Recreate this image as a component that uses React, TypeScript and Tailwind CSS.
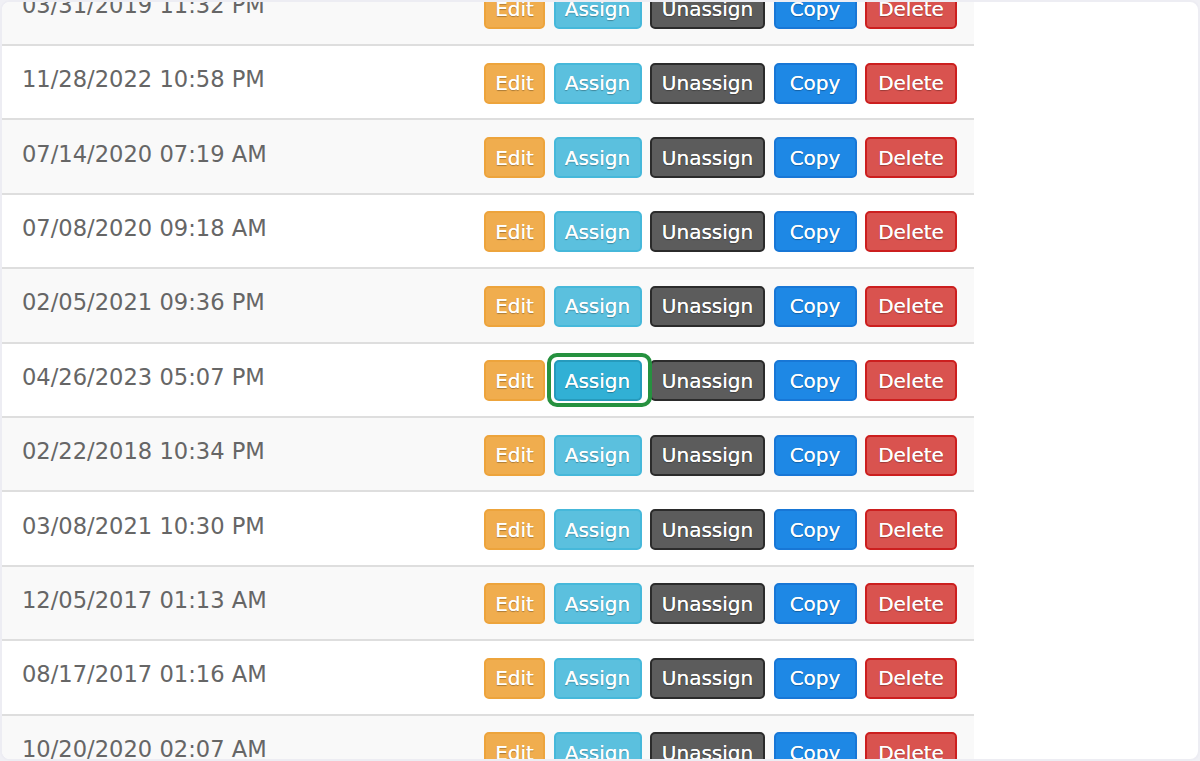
import React from "react";

const rows = [
  "03/31/2019 11:32 PM",
  "11/28/2022 10:58 PM",
  "07/14/2020 07:19 AM",
  "07/08/2020 09:18 AM",
  "02/05/2021 09:36 PM",
  "04/26/2023 05:07 PM",
  "02/22/2018 10:34 PM",
  "03/08/2021 10:30 PM",
  "12/05/2017 01:13 AM",
  "08/17/2017 01:16 AM",
  "10/20/2020 02:07 AM",
];

const btnBase =
  "h-[41px] rounded-[5px] border-2 text-white text-[20px] leading-none flex items-center justify-center [text-shadow:0_0_0.6px_rgba(255,255,255,0.9),0_1px_1px_rgba(0,0,0,0.3)]";

function Row({ date, idx }: { date: string; idx: number }) {
  const gray = idx % 2 === 0;
  const highlighted = idx === 5;
  return (
    <div
      className={`h-[74.4px] border-b-2 border-[#dedede] flex items-center ${
        gray ? "bg-[#f9f9f9]" : "bg-white"
      }`}
    >
      <div className="flex-1 pl-[20px] pb-[4px] text-[22.6px] text-[#666666] [font-family:'DejaVu_Sans',sans-serif]">
        {date}
      </div>
      <div className="flex items-center gap-[8.5px] pr-[17px] pt-[2px] [font-family:'DejaVu_Sans',sans-serif]">
        <button className={`${btnBase} w-[61px] bg-[#f0ad4e] border-[#eda43c]`}>Edit</button>
        <div className="relative">
          <button
            className={`${btnBase} w-[88px] ${
              highlighted ? "bg-[#31b0d5] border-[#269abc]" : "bg-[#5bc0de] border-[#46b8da]"
            }`}
          >
            Assign
          </button>
          {highlighted && (
            <span className="absolute -left-[7px] -right-[10px] -top-[7px] -bottom-[6px] border-4 border-[#26913f] rounded-[10px] pointer-events-none" />
          )}
        </div>
        <button className={`${btnBase} w-[115px] bg-[#5c5c5c] border-[#2b2b2b]`}>Unassign</button>
        <button className={`${btnBase} w-[83px] bg-[#1e88e5] border-[#1877d6]`}>Copy</button>
        <button className={`${btnBase} w-[92px] bg-[#d9534f] border-[#cc1f1f]`}>Delete</button>
      </div>
    </div>
  );
}

export default function App() {
  return (
    <div className="w-[1200px] h-[761px] bg-[#f0f0f5]">
      <div className="w-full h-full rounded-[10px] border-2 border-[#ededf3] bg-white overflow-hidden">
        <div className="w-[972px] -mt-[30.4px]">
          {rows.map((d, i) => (
            <Row key={i} date={d} idx={i} />
          ))}
        </div>
      </div>
    </div>
  );
}
